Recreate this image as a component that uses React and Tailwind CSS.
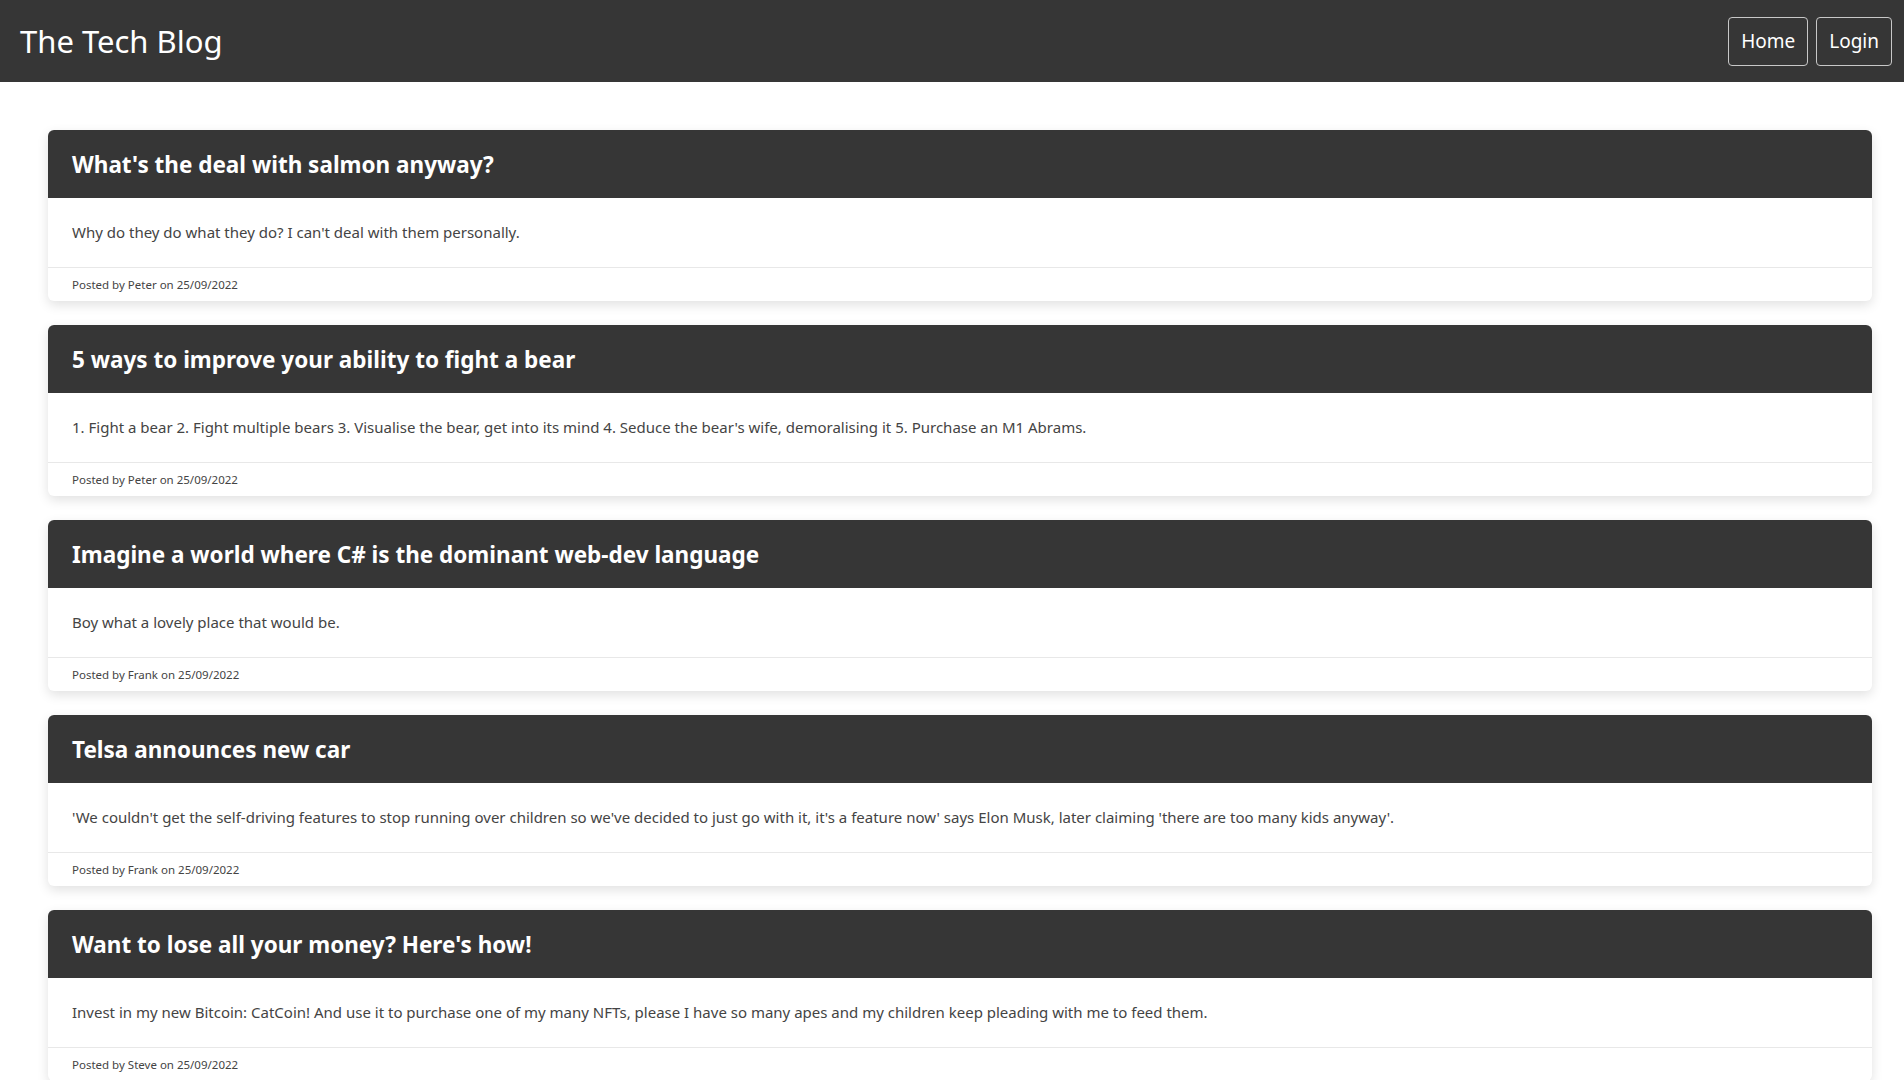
import React from 'react';

const posts = [
    {
        id: 1,
        title: "What's the deal with salmon anyway?",
        content: "Why do they do what they do? I can't deal with them personally.",
        author: 'Peter',
        date: '25/09/2022',
    },
    {
        id: 2,
        title: '5 ways to improve your ability to fight a bear',
        content: "1. Fight a bear 2. Fight multiple bears 3. Visualise the bear, get into its mind 4. Seduce the bear's wife, demoralising it 5. Purchase an M1 Abrams.",
        author: 'Peter',
        date: '25/09/2022',
    },
    {
        id: 3,
        title: 'Imagine a world where C# is the dominant web-dev language',
        content: 'Boy what a lovely place that would be.',
        author: 'Frank',
        date: '25/09/2022',
    },
    {
        id: 4,
        title: 'Telsa announces new car',
        content: "'We couldn't get the self-driving features to stop running over children so we've decided to just go with it, it's a feature now' says Elon Musk, later claiming 'there are too many kids anyway'.",
        author: 'Frank',
        date: '25/09/2022',
    },
    {
        id: 5,
        title: "Want to lose all your money? Here's how!",
        content: 'Invest in my new Bitcoin: CatCoin! And use it to purchase one of my many NFTs, please I have so many apes and my children keep pleading with me to feed them.',
        author: 'Steve',
        date: '25/09/2022',
    },
];

const PostCard = ({ post }) => (
    <div className="bg-white rounded-md overflow-hidden shadow-[0_4px_12px_rgba(0,0,0,0.12)]">
        <div className="bg-[#363636] h-[68px] flex items-center px-6 pt-[3px]">
            <h2 className="text-white text-[22.5px] font-bold leading-none">{post.title}</h2>
        </div>
        <div className="h-[69px] flex items-center px-6 text-[15px] text-[#444]">
            {post.content}
        </div>
        <div className="h-[34px] flex items-center px-6 border-t border-[#e8e8e8] text-[11.5px] text-[#444]">
            Posted by {post.author} on {post.date}
        </div>
    </div>
);

const App = () => {
    return (
        <div className="min-h-screen bg-white" style={{ fontFamily: '"Noto Sans", "Open Sans", sans-serif' }}>
            <nav className="bg-[#363636] h-[82px] flex items-center justify-between pl-5 pr-3">
                <h1 className="text-white text-[31px] leading-none">The Tech Blog</h1>
                <div className="flex gap-2">
                    <a className="h-[49px] px-3 flex items-center border border-[#c8c8c8] rounded text-white text-[19px]">Home</a>
                    <a className="h-[49px] px-3 flex items-center border border-[#c8c8c8] rounded text-white text-[19px]">Login</a>
                </div>
            </nav>
            <main className="pt-12 pl-12 pr-8 pb-6 flex flex-col gap-6">
                {posts.map((post) => (
                    <PostCard key={post.id} post={post} />
                ))}
            </main>
        </div>
    );
};

export default App;
